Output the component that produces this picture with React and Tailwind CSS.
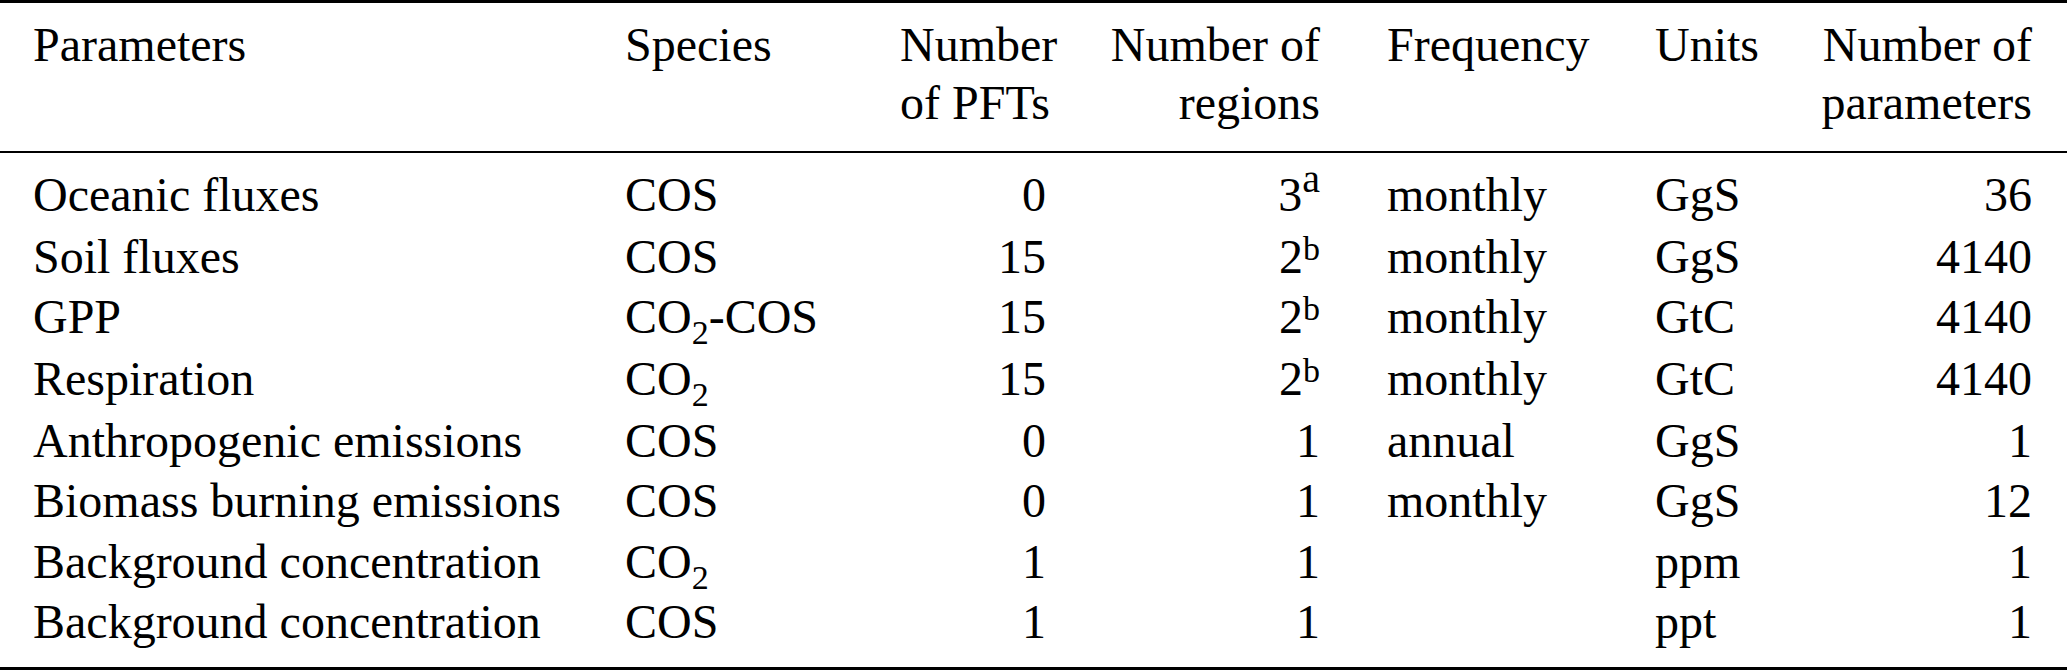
import React from "react";

const grid =
  "grid grid-cols-[625px_275px_146px_274px_335px_145px_232px] pr-[35px]";

function SupA() {
  return <span className="relative -top-[19px] text-[40px]">a</span>;
}

function SupB() {
  return <span className="relative -top-[13px] text-[34px]">b</span>;
}

function Sub({ children }) {
  return (
    <span className="relative top-[11px] text-[34px]">{children}</span>
  );
}

const CO2 = (
  <>
    CO<Sub>2</Sub>
  </>
);

const rows = [
  { h: "h-[62px]", c: ["Oceanic fluxes", "COS", "0", <>3<SupA /></>, "monthly", "GgS", "36"] },
  { h: "h-[60px]", c: ["Soil fluxes", "COS", "15", <>2<SupB /></>, "monthly", "GgS", "4140"] },
  { h: "h-[62px]", c: ["GPP", <>{CO2}-COS</>, "15", <>2<SupB /></>, "monthly", "GtC", "4140"] },
  { h: "h-[62px]", c: ["Respiration", CO2, "15", <>2<SupB /></>, "monthly", "GtC", "4140"] },
  { h: "h-[60px]", c: ["Anthropogenic emissions", "COS", "0", "1", "annual", "GgS", "1"] },
  { h: "h-[61px]", c: ["Biomass burning emissions", "COS", "0", "1", "monthly", "GgS", "12"] },
  { h: "h-[60px]", c: ["Background concentration", CO2, "1", "1", "", "ppm", "1"] },
  { h: "h-[58px]", c: ["Background concentration", "COS", "1", "1", "", "ppt", "1"] },
];

const align = [
  "pl-[33px] text-left",
  "text-left",
  "text-right",
  "text-right",
  "pl-[67px] text-left",
  "text-left",
  "text-right",
];

export default function App() {
  return (
    <div className="w-[2067px] h-[670px] bg-white text-black text-[48px] leading-[58px] overflow-hidden font-['Liberation_Serif','Times_New_Roman',serif]">
      <div className="h-[3px] bg-black" />
      <div className={`${grid} pt-[13px] pb-[19px]`}>
        <div className={align[0]}>Parameters</div>
        <div className={align[1]}>Species</div>
        <div className={`${align[2]} whitespace-nowrap`}>
          Number
          <br />
          of PFTs
        </div>
        <div className={`${align[3]} whitespace-nowrap`}>
          Number of
          <br />
          regions
        </div>
        <div className={align[4]}>Frequency</div>
        <div className={align[5]}>Units</div>
        <div className={`${align[6]} whitespace-nowrap`}>
          Number of
          <br />
          parameters
        </div>
      </div>
      <div className="h-[2px] bg-black" />
      <div className="pt-[13px] pb-[16px]">
        {rows.map((r, i) => (
          <div key={i} className={`${grid} ${r.h}`}>
            {r.c.map((cell, j) => (
              <div key={j} className={`${align[j]} whitespace-nowrap`}>
                {cell}
              </div>
            ))}
          </div>
        ))}
      </div>
      <div className="h-[3px] bg-black" />
    </div>
  );
}
